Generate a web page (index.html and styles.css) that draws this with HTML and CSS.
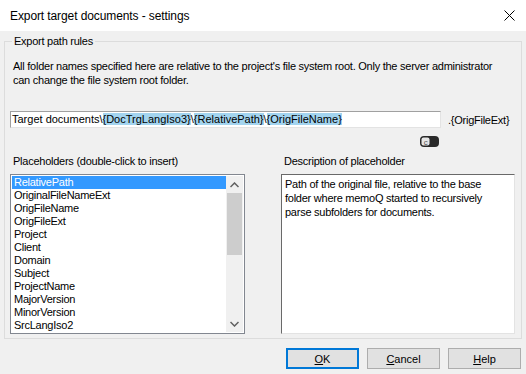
FILE: index.html
```html
<!DOCTYPE html>
<html lang="en">
<head>
    <meta charset="UTF-8">
    <title>Export target documents - settings</title>
    <link rel="stylesheet" href="styles.css">
</head>
<body>
    <div class="titlebar">
        <span class="title">Export target documents - settings</span>
        <svg class="close" width="11" height="11" viewBox="0 0 11 11">
            <path d="M0.5 0.5 L10.5 10.5 M10.5 0.5 L0.5 10.5" stroke="#000" stroke-width="1" fill="none"/>
        </svg>
    </div>

    <div class="group">
        <span class="legend">Export path rules</span>
        <p class="info">All folder names specified here are relative to the project's file system root. Only the server administrator can change the file system root folder.</p>

        <div class="path-row">
            <div class="path-box">Target documents\<span class="tok">{DocTrgLangIso3}</span>\<span class="tok">{RelativePath}</span>\<span class="tok">{OrigFileName}</span></div>
            <span class="ext">.{OrigFileExt}</span>
        </div>

        <div class="toggle-row">
            <svg width="19" height="11" viewBox="0 0 19 11">
                <rect x="0" y="0" width="19" height="11" rx="4" fill="#2a2a2a"/>
                <rect x="1.5" y="1.5" width="8" height="8" rx="2" fill="#e6e6e6"/>
                <text x="5.5" y="8.5" font-size="8" font-family="Liberation Sans, sans-serif" fill="#555" text-anchor="middle">c</text>
            </svg>
        </div>

        <div class="columns">
            <div class="col">
                <div class="label">Placeholders (double-click to insert)</div>
                <div class="listbox">
                    <ul class="items">
                        <li class="selected">RelativePath</li>
                        <li>OriginalFileNameExt</li>
                        <li>OrigFileName</li>
                        <li>OrigFileExt</li>
                        <li>Project</li>
                        <li>Client</li>
                        <li>Domain</li>
                        <li>Subject</li>
                        <li>ProjectName</li>
                        <li>MajorVersion</li>
                        <li>MinorVersion</li>
                        <li>SrcLangIso2</li>
                    </ul>
                    <div class="scrollbar">
                        <div class="arrow">
                            <svg width="9" height="6" viewBox="0 0 9 6"><path d="M0.5 5 L4.5 1 L8.5 5" stroke="#606060" stroke-width="1.5" fill="none"/></svg>
                        </div>
                        <div class="thumb"></div>
                        <div class="track"></div>
                        <div class="arrow">
                            <svg width="9" height="6" viewBox="0 0 9 6"><path d="M0.5 1 L4.5 5 L8.5 1" stroke="#606060" stroke-width="1.5" fill="none"/></svg>
                        </div>
                    </div>
                </div>
            </div>
            <div class="col">
                <div class="label">Description of placeholder</div>
                <div class="desc">Path of the original file, relative to the base<br>folder where memoQ started to recursively<br>parse subfolders for documents.</div>
            </div>
        </div>
    </div>

    <div class="buttons">
        <button class="btn default"><u>O</u>K</button>
        <button class="btn"><u>C</u>ancel</button>
        <button class="btn"><u>H</u>elp</button>
    </div>
</body>
</html>
```

FILE: styles.css
```css
* {
    margin: 0;
    padding: 0;
    box-sizing: border-box;
}

body {
    width: 526px;
    height: 374px;
    background: #f0f0f0;
    font-family: "Liberation Sans", Arial, sans-serif;
    font-size: 11px;
    letter-spacing: -0.25px;
    color: #000;
    overflow: hidden;
}

.titlebar {
    height: 31px;
    background: #fff;
    display: flex;
    align-items: center;
    justify-content: space-between;
    padding: 0 11px 0 10px;
}

.title {
    font-size: 12px;
    letter-spacing: -0.1px;
}

.close {
    margin-top: -1px;
}

.group {
    position: relative;
    margin: 10px 4px 0 4px;
    height: 298px;
    border: 1px solid #dcdcdc;
    padding: 17px 5px 0 5px;
}

.legend {
    position: absolute;
    top: -8px;
    left: 7px;
    padding: 0 2px;
    background: #f0f0f0;
    line-height: 14px;
}

.info {
    line-height: 14px;
    margin-left: 3px;
    padding-right: 22px;
}

.path-row {
    display: flex;
    align-items: center;
    margin-top: 24px;
}

.path-box {
    width: 431px;
    height: 17px;
    background: #fff;
    border: 1px solid;
    border-color: #a0a0a0 #e3e3e3 #e3e3e3 #a0a0a0;
    padding-left: 1px;
    line-height: 15px;
    letter-spacing: 0;
    white-space: nowrap;
}

.tok {
    background: #a3d4ef;
}

.ext {
    margin-left: 7px;
}

.toggle-row {
    display: flex;
    justify-content: flex-end;
    padding-right: 77px;
    margin-top: 8px;
    height: 11px;
}

.columns {
    display: flex;
    gap: 36px;
    margin-top: 7px;
}

.col {
    display: flex;
    flex-direction: column;
}

.col:first-child {
    width: 235px;
}

.col:last-child {
    width: 234px;
}

.label {
    line-height: 14px;
    margin-left: 3px;
    margin-bottom: 6px;
}

.listbox {
    height: 160px;
    border: 1px solid #828790;
    padding: 1px;
    background: #fff;
    display: flex;
}

.items {
    list-style: none;
    flex: 1;
}

.items li {
    height: 13px;
    line-height: 13px;
    padding-left: 2px;
}

.items li.selected {
    background: #3399ff;
    color: #fff;
}

.scrollbar {
    width: 17px;
    background: #f0f0f0;
    display: flex;
    flex-direction: column;
}

.arrow {
    height: 17px;
    display: flex;
    align-items: center;
    justify-content: center;
}

.thumb {
    height: 62px;
    margin: 0 1px;
    background: #cdcdcd;
}

.track {
    flex: 1;
}

.desc {
    height: 160px;
    background: #fff;
    border: 1px solid;
    border-color: #696969 #e3e3e3 #e3e3e3 #696969;
    padding: 2px 3px;
    line-height: 14px;
}

.buttons {
    display: flex;
    justify-content: flex-end;
    gap: 8px;
    padding-right: 5px;
    margin-top: 9px;
}

.btn {
    width: 73px;
    height: 21px;
    background: #e1e1e1;
    border: 1px solid #adadad;
    font-family: inherit;
    font-size: 11px;
    color: #000;
}

.btn.default {
    border: 2px solid #0078d7;
}
```
